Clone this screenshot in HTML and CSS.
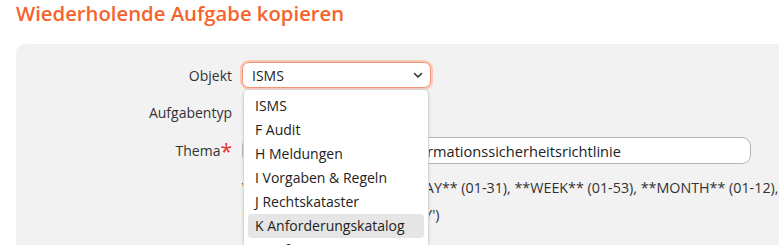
FILE: index.html
```html
<!DOCTYPE html>
<html lang="de">
<head>
<meta charset="utf-8">
<title>Wiederholende Aufgabe kopieren</title>
<link rel="stylesheet" href="styles.css">
</head>
<body>
<h1 class="title">Wiederholende Aufgabe kopieren</h1>
<div class="panel">
  <div class="row row-objekt">
    <label class="label">Objekt</label>
    <div class="select">
      <span class="select-value">ISMS</span>
      <svg class="chevron" width="10" height="7" viewBox="0 0 10 7"><path d="M1.5 1.5 L5 5 L8.5 1.5" fill="none" stroke="#333" stroke-width="1.6" stroke-linecap="round" stroke-linejoin="round"/></svg>
    </div>
  </div>
  <div class="row row-typ">
    <label class="label">Aufgabentyp</label>
    <div class="plain">Überprüfung</div>
  </div>
  <div class="row row-thema">
    <label class="label">Thema<span class="req">*</span></label>
    <div class="input">Jährliche Prüfung der Informationssicherheitsrichtlinie</div>
  </div>
  <div class="row row-help">
    <span class="label"></span>
    <div class="help">Verfügbare Platzhalter: **DAY** (01-31), **WEEK** (01-53), **MONTH** (01-12),<br>und **YEAR** (Format 'YYYY')</div>
  </div>

  <ul class="dropdown">
    <li>ISMS</li>
    <li>F Audit</li>
    <li>H Meldungen</li>
    <li>I Vorgaben &amp; Regeln</li>
    <li>J Rechtskataster</li>
    <li class="hover">K Anforderungskatalog</li>
    <li>L Lieferanten</li>
  </ul>
</div>
</body>
</html>
```

FILE: styles.css
```css
html, body {
  margin: 0;
  padding: 0;
  background: #ffffff;
  overflow: hidden;
}
body {
  font-family: "Open Sans", "Noto Sans", sans-serif;
  color: #333333;
  width: 779px;
  height: 245px;
}
.title {
  margin: 0;
  padding: 0 0 0 16px;
  height: 44px;
  line-height: 26px;
  font-size: 20.3px;
  font-weight: 600;
  color: #f5642d;
}
.panel {
  position: relative;
  margin-left: 16px;
  width: 800px;
  height: 201px;
  overflow: hidden;
  background: #f2f2f2;
  border-radius: 9px 0 0 0;
  padding-top: 18px;
  box-sizing: border-box;
}
.row {
  display: flex;
  align-items: center;
  gap: 10px;
}
.label {
  width: 216px;
  flex: none;
  text-align: right;
  font-size: 14px;
  color: #333;
}
.req {
  color: #e8322b;
  font-size: 21px;
  line-height: 10px;
  position: relative;
  top: 3px;
}
.row-objekt { height: 26px; margin-bottom: 12px; }
.row-typ { height: 24px; margin-bottom: 13px; }
.row-thema { height: 27px; margin-bottom: 0; }
.row-help { align-items: flex-start; padding-top: 10px; }

.select {
  width: 189px;
  height: 26px;
  box-sizing: border-box;
  background: #fff;
  border: 1px solid #ee9678;
  border-radius: 7px;
  box-shadow: 0 0 0 2px #fcc9b6;
  display: flex;
  align-items: center;
  justify-content: space-between;
  padding: 0 7px 0 9px;
  font-size: 14px;
  color: #222;
}
.plain {
  font-size: 14px;
}
.input {
  width: 509px;
  height: 27px;
  box-sizing: border-box;
  background: #fff;
  border: 1px solid #b4b4b4;
  border-radius: 9px;
  padding: 0 10px;
  display: flex;
  align-items: center;
  font-size: 14.6px;
  color: #222;
  white-space: nowrap;
  overflow: hidden;
}
.help {
  font-size: 14.3px;
  line-height: 27px;
  color: #333;
  white-space: nowrap;
}
.dropdown {
  position: absolute;
  left: 227px;
  top: 45px;
  width: 186px;
  height: 220px;
  margin: 0;
  padding: 4px 4px 0 4px;
  box-sizing: border-box;
  list-style: none;
  background: #fff;
  border: 1px solid #d6d6d6;
  border-radius: 5px;
  box-shadow: 0 1px 3px rgba(0,0,0,0.12);
}
.dropdown li {
  height: 24px;
  line-height: 24px;
  padding-left: 7px;
  font-size: 14px;
  color: #222;
  border-radius: 4px;
  white-space: nowrap;
}
.dropdown li.hover {
  background: #e6e6e6;
}
```
